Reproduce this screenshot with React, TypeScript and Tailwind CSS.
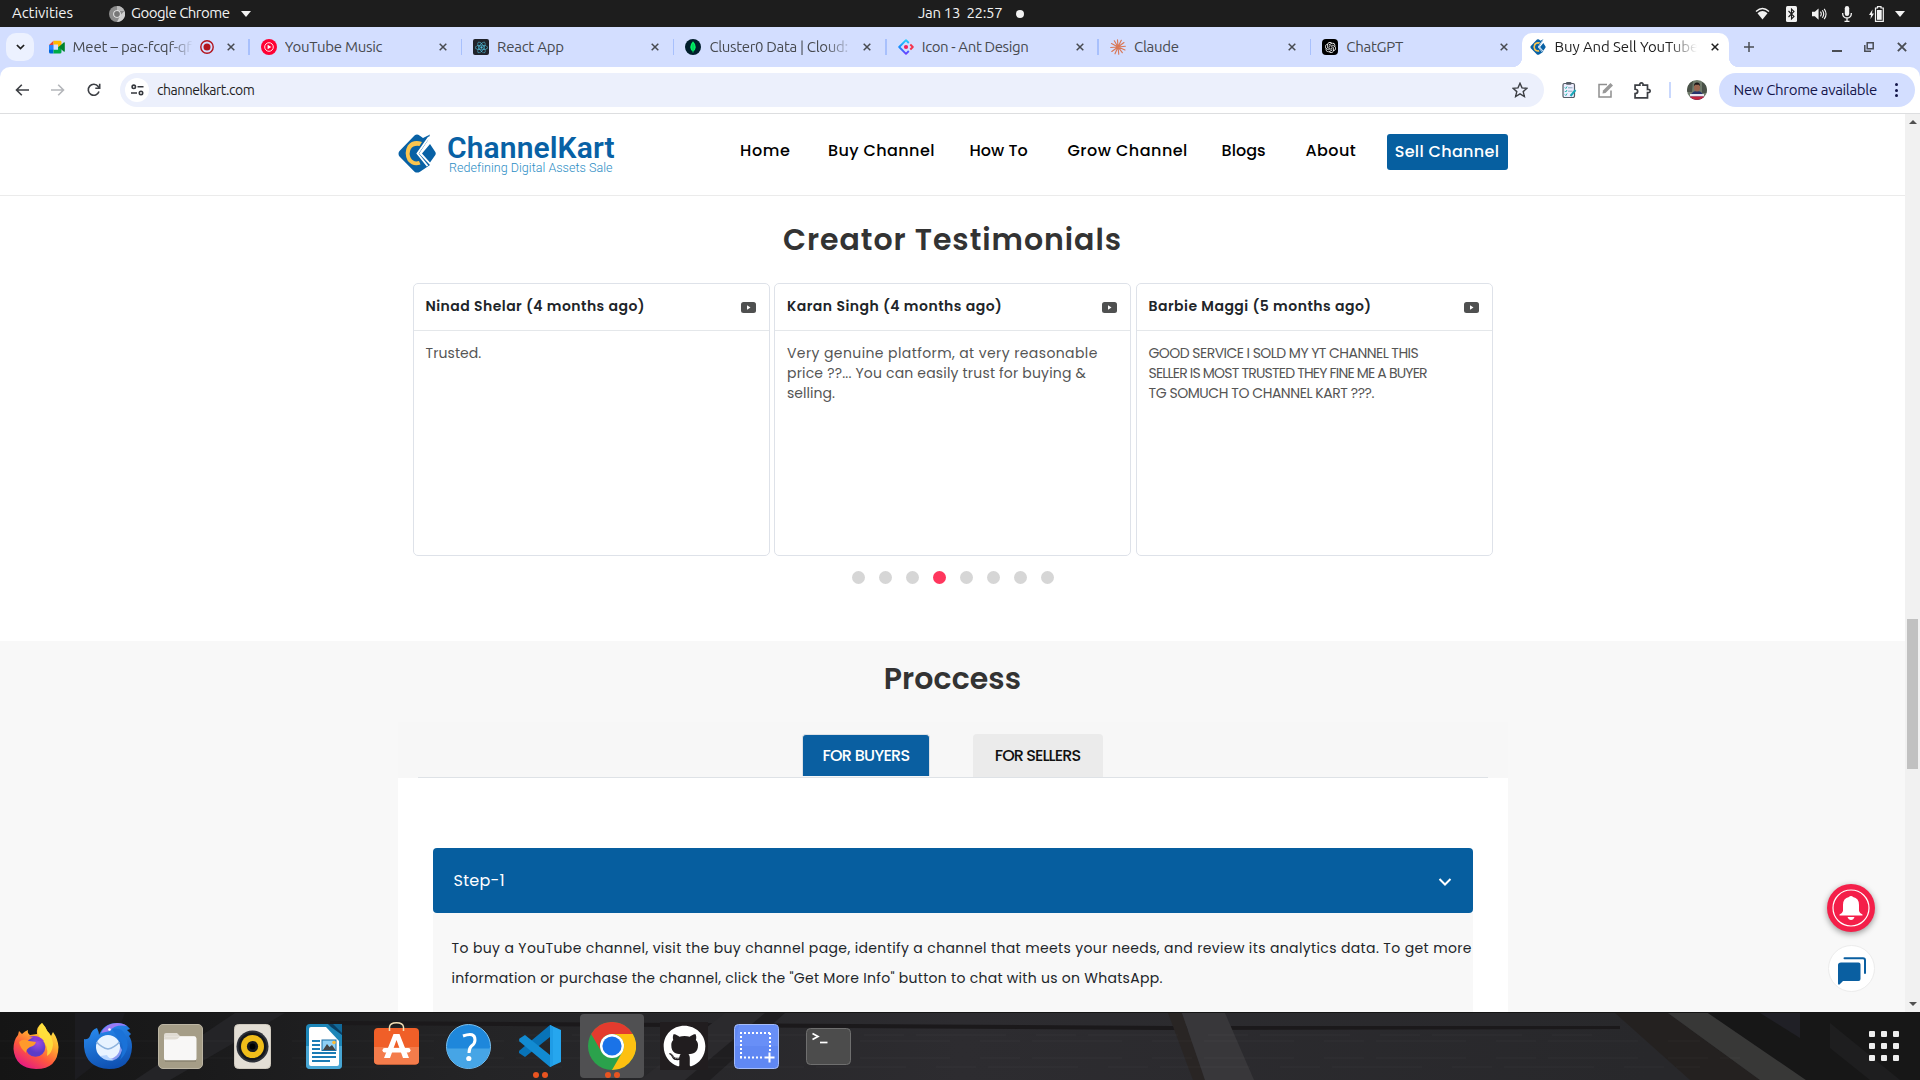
import React from "react";
import { FaReact, FaGithub } from "react-icons/fa";
import { SiOpenai } from "react-icons/si";

const ui = "font-['Ubuntu','Noto_Sans',sans-serif]";
const page = "font-['Poppins','Inter',sans-serif] [font-feature-settings:'cv11']";

/* ---------- brand mark ---------- */
function KartMark({ className }: { className: string }) {
  return (
    <svg viewBox="0 0 38 39" className={className}>
      <path d="M16.5 1.5Q19 -.3 21.500 1.500L25 4L32 .5L29.500 7L21 19.500L32 31L22 37.700Q19 39.500 16.500 37.700L1.500 22.500Q-.5 19.500 1.500 17Z" fill="#0861a5" />
      <path d="M24 8Q15 5 9.800 11.500Q5.500 19 9.800 27Q15 33 22.500 30.500L21 27Q15.500 28.500 12.800 24Q10.500 19.500 12.800 15Q15.500 11 21.500 12Z" fill="#fbc54e" />
      <path d="M31 3L19.500 19.500L29.500 32" fill="none" stroke="#fff" strokeWidth="1.900" />
      <path d="M32 10L37 17.500Q38.500 19.500 37 21.500L32 28.500L24 19.500Z" fill="#0861a5" />
    </svg>
  );
}

/* ---------- favicons ---------- */
function MeetIcon() {
  return (
    <svg viewBox="0 0 16 16" className="size-4">
      <path d="M0 6L4.500 1.800V6Z" fill="#ea4335" />
      <rect y="6" width="4.500" height="5" fill="#2684fc" />
      <path d="M0 10.800H4.500V14.500H1.500Q0 14.500 0 13Z" fill="#0066da" />
      <path d="M4.500 1.800H11Q12.500 1.800 12.500 3.200V7L9 8V5.500H4.500Z" fill="#ffba00" />
      <path d="M4.500 10.800H9V8L12.500 7V13Q12.500 14.500 11 14.500H4.500Z" fill="#00ac47" />
      <path d="M9.500 8L15 3.300Q15.800 3 15.800 4V12.300Q15.800 13 15 12.700Z" fill="#00832d" />
    </svg>
  );
}
function MusicIcon() {
  return (
    <svg viewBox="0 0 16 16" className="size-4">
      <circle cx="8" cy="8" r="8" fill="#ff0033" />
      <circle cx="8" cy="8" r="4.300" fill="none" stroke="#fff" strokeWidth=".9" />
      <path d="M6.600 5.800L10.300 8L6.600 10.200Z" fill="#fff" />
    </svg>
  );
}
function ReactFav() {
  return (
    <span className="flex size-4 items-center justify-center rounded-[2px] bg-[#20232a]">
      <FaReact className="size-[13px] text-[#52c1de]" />
    </span>
  );
}
function MongoIcon() {
  return (
    <svg viewBox="0 0 16 16" className="size-4">
      <circle cx="8" cy="8" r="8" fill="#001e2b" />
      <path d="M8 2.300Q10.800 5 10.800 8.300Q10.500 11 8.300 12.400V13.800H7.700V12.400Q5.400 11 5.200 8.300Q5.300 5 8 2.300Z" fill="#00ed64" />
      <path d="M8 5V13" stroke="#00a34a" strokeWidth=".6" />
    </svg>
  );
}
function AntIcon() {
  return (
    <svg viewBox="0 0 16 16" className="size-4" fill="none" strokeWidth="1.900">
      <defs>
        <linearGradient id="ant" x1="0" y1="0" x2="0" y2="1">
          <stop offset="0" stopColor="#29cdff" />
          <stop offset=".5" stopColor="#148eff" />
          <stop offset="1" stopColor="#6a3cff" />
        </linearGradient>
      </defs>
      <path d="M10.800 4L8 1.200L1.200 8L8 14.800L10.800 12" stroke="url(#ant)" strokeLinejoin="round" />
      <path d="M12.300 5.500L14.800 8L12.300 10.500" stroke="#f5334c" strokeLinejoin="round" />
      <circle cx="8" cy="8" r="2.100" fill="#f2225d" />
    </svg>
  );
}
function ClaudeIcon() {
  return (
    <svg viewBox="0 0 16 16" className="size-4" stroke="#d97757" strokeWidth="1.150" strokeLinecap="round">
      <path d="M8 8L7.500 .8M8 8L11.300 1.300M8 8L14 3.500M8 8L15.400 7.300M8 8L15 11M8 8L12.300 13.700M8 8L8.800 15.300M8 8L5 14.800M8 8L1.800 12.500M8 8L.7 8.500M8 8L1.500 4.500M8 8L4.300 1.800" />
    </svg>
  );
}
function GptIcon() {
  return (
    <span className="flex size-4 items-center justify-center rounded-[4px] bg-black">
      <SiOpenai className="size-[11px] text-white" />
    </span>
  );
}

function Cross({ className }: { className: string }) {
  return (
    <svg viewBox="0 0 8 8" className={className} stroke="currentColor" strokeWidth="1.500">
      <path d="M.7 .7L7.300 7.300M7.300 .7L.7 7.300" />
    </svg>
  );
}

type Tab = { title: string; icon: React.ReactNode; spacing: string; fade?: boolean; rec?: boolean };
const tabs: Tab[] = [
  { title: "Meet – pac-fcqf-qfz", icon: <MeetIcon />, spacing: "tracking-[-0.2px]", fade: true, rec: true },
  { title: "YouTube Music", icon: <MusicIcon />, spacing: "tracking-[-0.28px]" },
  { title: "React App", icon: <ReactFav />, spacing: "tracking-[-0.25px]" },
  { title: "Cluster0 Data | Cloud:", icon: <MongoIcon />, spacing: "tracking-[-0.33px]", fade: true },
  { title: "Icon - Ant Design", icon: <AntIcon />, spacing: "tracking-[-0.38px]" },
  { title: "Claude", icon: <ClaudeIcon />, spacing: "tracking-[-0.28px]" },
  { title: "ChatGPT", icon: <GptIcon />, spacing: "tracking-[-0.27px]" },
];

const fadeMask = "[mask-image:linear-gradient(to_right,black_80%,transparent)]";

function SystemBar() {
  return (
    <header className="flex h-[27px] shrink-0 items-center bg-[#1d1d1d] text-[15px] text-[#f2f2f2]">
      <div className="flex w-[918px] items-center pl-3">
        <span className="w-[97px] tracking-[-0.05px]">Activities</span>
        <svg viewBox="0 0 16 16" className="size-4">
          <circle cx="8" cy="8" r="8" fill="#8b8b8b" />
          <path d="M8 0A8 8 0 0 1 15.500 5H8Z" fill="#b9b9b9" />
          <path d="M15.500 5A8 8 0 0 1 8 16L11.500 9Z" fill="#d0d0d0" />
          <circle cx="8" cy="8" r="3.800" fill="#eee" />
          <circle cx="8" cy="8" r="2.900" fill="#777" />
        </svg>
        <span className="ml-1.5 w-[110px] tracking-[-0.52px] whitespace-nowrap">Google Chrome</span>
        <svg viewBox="0 0 10 6" className="h-1.5 w-2.5" fill="#f2f2f2"><path d="M0 0H10L5 6Z" /></svg>
      </div>
      <span className="w-[98px] tracking-[-0.31px] whitespace-pre">Jan 13  22:57</span>
      <span className="size-2 rounded-full bg-[#f2f2f2]" />
      <div className="ml-auto flex items-center pr-[15px] text-[#f2f2f2]">
        <svg viewBox="0 0 16 14" className="mr-4 h-[13px] w-[15px]" fill="none" stroke="currentColor">
          <path d="M1 4.800Q8 -1.500 15 4.800" strokeWidth="1.500" />
          <path d="M2.600 6.600Q8 2 13.400 6.600L8 13.500Z" fill="currentColor" stroke="none" />
        </svg>
        <svg viewBox="0 0 11 16" className="mr-[15px] h-4 w-[11px]">
          <rect width="11" height="16" rx="1.500" fill="#f2f2f2" />
          <path d="M2.500 5L8 10.500L5.500 13V3L8 5.500L2.500 11" fill="none" stroke="#1d1d1d" strokeWidth="1.100" />
        </svg>
        <svg viewBox="0 0 16 14" className="mr-[15px] h-[14px] w-[15px]" fill="none" stroke="currentColor" strokeWidth="1.200">
          <path d="M0 4.500H3L7 1V13L3 9.500H0Z" fill="currentColor" stroke="none" />
          <path d="M9 4.500Q10.800 7 9 9.500M11 3Q14 7 11 11M13 1.500Q17 7 13 12.500" />
        </svg>
        <svg viewBox="0 0 10 16" className="mr-[17px] h-4 w-[10px]" fill="none" stroke="currentColor" strokeWidth="1.300">
          <rect x="2.800" width="4.400" height="10" rx="2.200" fill="currentColor" stroke="none" />
          <path d="M.7 7V8Q1 11.800 5 12Q9 11.800 9.300 8V7M5 12V15.500M2.500 15.300H7.500" />
        </svg>
        <svg viewBox="0 0 15 16" className="mr-[11px] h-4 w-[15px]">
          <path d="M3.500 3.500L0 9H2L1.500 13L5 7.500H3Z" fill="#f2f2f2" />
          <path d="M8.500 2V.7H12V2H14.300V15.300H6.500V2Z" fill="none" stroke="#f2f2f2" strokeWidth="1.200" />
          <rect x="8" y="4" width="4.700" height="9.800" fill="#f2f2f2" />
        </svg>
        <svg viewBox="0 0 10 6" className="h-1.5 w-2.5" fill="currentColor"><path d="M0 0H10L5 6Z" /></svg>
      </div>
    </header>
  );
}

function TabStrip() {
  return (
    <div className="flex h-10 shrink-0 items-end bg-[#d3deff] text-[15px]">
      <div className="flex h-[34px] w-[37.500px] items-center">
        <span className="mb-1.5 ml-1.5 flex size-7 items-center justify-center rounded-[10px] bg-[#ecf1ff]">
          <svg viewBox="0 0 10 6" className="h-1.5 w-[9px]" fill="none" stroke="#1f1f1f" strokeWidth="1.900"><path d="M1 .8L5 4.800L9 .8" /></svg>
        </span>
      </div>
      {tabs.map((t, i) => (
        <div key={t.title} className="flex h-10 w-[212.300px] items-center pb-0 text-[#474a50]">
          <div className="flex w-full items-center pl-[11px]">
            {t.icon}
            <span className={`ml-2 overflow-hidden whitespace-nowrap ${t.spacing} ${t.rec ? "w-[120px]" : "w-[145px]"} ${t.fade ? fadeMask : ""}`}>{t.title}</span>
            {t.rec && (
              <svg viewBox="0 0 14 14" className="ml-[7px] size-[14px]">
                <circle cx="7" cy="7" r="6.200" fill="none" stroke="#b3141d" strokeWidth="1.400" />
                <circle cx="7" cy="7" r="3.500" fill="#b3141d" />
              </svg>
            )}
            <Cross className={t.rec ? "ml-[13px] size-2" : "ml-[9px] size-2"} />
            <span className={i === 6 ? "ml-auto h-4 w-[1.500px]" : "ml-auto h-4 w-[1.500px] bg-[#a8c0fc]"} />
          </div>
        </div>
      ))}
      <div className="-ml-3 flex h-[34px] items-end">
        <span className="h-2.5 w-2.5 bg-[radial-gradient(circle_at_0_0,transparent_10px,white_10.500px)]" />
        <div className="flex h-[34px] w-[207px] items-center rounded-t-[10px] bg-white pb-1.5 pl-2 text-[#1f1f1f]">
          <KartMark className="size-4" />
          <span className={`mt-0 ml-[9px] w-[142px] overflow-hidden tracking-[-0.1px] whitespace-nowrap ${fadeMask}`}>Buy And Sell YouTube</span>
          <Cross className="ml-[14px] size-2" />
        </div>
        <span className="h-2.5 w-2.5 bg-[radial-gradient(circle_at_100%_0,transparent_10px,white_10.500px)]" />
      </div>
      <div className="flex h-10 flex-1 items-center text-[#4a4d54]">
        <svg viewBox="0 0 10 10" className="ml-[5px] size-2.5" stroke="currentColor" strokeWidth="1.500"><path d="M5 0V10M0 5H10" /></svg>
        <div className="ml-auto flex items-center">
          <span className="mt-2 h-[1.500px] w-2.5 bg-[#4a4d54]" />
          <svg viewBox="0 0 10 10" className="ml-[22px] size-2.5" fill="none" stroke="currentColor" strokeWidth="1.500"><path d="M3.200 .8H9.200V6.800H3.200Z" /><path d="M.8 3V9.200H7" /></svg>
          <Cross className="mr-[13px] ml-[23px] size-2.5" />
        </div>
      </div>
    </div>
  );
}

function Toolbar() {
  return (
    <div className="flex h-[46px] shrink-0 items-center bg-[#d3deff]">
      <div className="flex h-[46px] w-full items-center rounded-t-[10px] bg-white text-[#474a50]">
        <svg viewBox="0 0 14 12" className="ml-[15px] h-3 w-[14px]" fill="none" stroke="#3c3f44" strokeWidth="1.600"><path d="M14 6H1.500M6.800 .7L1.500 6L6.800 11.300" /></svg>
        <svg viewBox="0 0 14 12" className="ml-[22px] h-3 w-[14px]" fill="none" stroke="#b4b6ba" strokeWidth="1.600"><path d="M0 6H12.500M7.200 .7L12.500 6L7.200 11.300" /></svg>
        <svg viewBox="0 0 14 14" className="ml-[22px] size-[14px]" fill="none" stroke="#3c3f44" strokeWidth="1.600"><path d="M12 8.500A5.500 5.500 0 1 1 11.200 3.500L12.500 5M12.700 .8V5.200H8.300" /></svg>
        <div className="ml-[19px] flex h-[34px] w-[1424px] items-center rounded-full bg-[#ecf0fc]">
          <span className="ml-[5px] flex size-6 items-center justify-center rounded-full bg-white">
            <svg viewBox="0 0 13 12" className="h-3 w-[13px]" fill="none" stroke="#34373c" strokeWidth="1.600"><circle cx="2.800" cy="2.800" r="1.700" /><path d="M6.500 2.800H12.500M0 9H6" /><circle cx="10" cy="9" r="1.700" /></svg>
          </span>
          <span className="ml-2 text-[14px] tracking-[-0.48px] text-[#1f1f1f]">channelkart.com</span>
          <svg viewBox="0 0 16 16" className="mr-4 ml-auto size-4" fill="none" stroke="#3c3f44" strokeWidth="1.400"><path d="M8 1.300L10 5.900L15 6.300L11.200 9.600L12.400 14.500L8 11.900L3.600 14.500L4.800 9.600L1 6.300L6 5.900Z" /></svg>
        </div>
        <svg viewBox="0 0 15 16" className="ml-[18px] h-4 w-[15px]">
          <rect x="1" y="1.500" width="11.500" height="14" rx="1.500" fill="#eef" stroke="#555c66" strokeWidth="1.200" />
          <rect x="4" y="0" width="5.500" height="2.800" rx="1" fill="#555c66" />
          <path d="M2.800 5.500L3.800 6.500L5 4.500M2.800 9L3.800 10L5 8M2.800 12.500L3.800 13.500L5 11.500" fill="none" stroke="#1bb5a8" />
          <path d="M6 5.800H10.500M6 9.200H10.500" stroke="#8ab" />
          <path d="M8.500 14L13.500 8" stroke="#19a8b8" strokeWidth="2" />
        </svg>
        <svg viewBox="0 0 16 16" className="ml-[21px] size-4" fill="none">
          <path d="M9 2.500H1V15H13V8.500" stroke="#8f8f8f" strokeWidth="1.500" />
          <path d="M4.500 11.500L5 8.500L12.500 1L15 3.500L7.500 11Z" fill="#999" />
        </svg>
        <svg viewBox="0 0 16 16" className="ml-5 size-[17px]" fill="none" stroke="#3c3f44" strokeWidth="1.600">
          <path d="M1 3H5.500Q5.200 .8 7 .8Q8.800 .8 8.500 3H12.700V7Q15.200 6.700 15.200 8.500Q15.200 10.300 12.700 10V15H1V11Q3.500 11 3.500 8.800Q3.500 6.800 1 6.800Z" />
        </svg>
        <span className="ml-[18px] h-4 w-[1.500px] bg-[#c9d8fd]" />
        <svg viewBox="0 0 20 20" className="ml-[16px] size-5">
          <defs><clipPath id="av"><circle cx="10" cy="10" r="10" /></clipPath></defs>
          <g clipPath="url(#av)">
            <rect width="20" height="20" fill="#6f7b6b" />
            <path d="M0 4L6 0L5 12H0ZM15 2L20 5V13H15Z" fill="#4a5249" />
            <path d="M3 20Q3 11 10 11Q17 11 17 20Z" fill="#27346d" />
            <rect x="3" y="14" width="14" height="2.500" fill="#e8e8f0" />
            <rect x="3" y="16.500" width="14" height="4" fill="#c22540" />
            <ellipse cx="10" cy="7.500" rx="3" ry="4" fill="#9a654e" />
            <path d="M6.800 6.500Q7 2.500 10 2.500Q13 2.500 13.200 6.500L12 4.800H8Z" fill="#1c1517" />
          </g>
        </svg>
        <div className="ml-3 flex h-[34px] w-[196px] items-center rounded-full bg-[#d3deff] pl-[15px] text-[#13154a]">
          <span className="w-[161px] text-[15px] tracking-[-0.33px] whitespace-nowrap">New Chrome available</span>
          <span className="flex flex-col gap-[2.500px]">
            <i className="size-[3px] rounded-full bg-[#13154a]" />
            <i className="size-[3px] rounded-full bg-[#13154a]" />
            <i className="size-[3px] rounded-full bg-[#13154a]" />
          </span>
        </div>
      </div>
    </div>
  );
}

/* ---------- site ---------- */
function SiteHeader() {
  return (
    <div className="flex h-[82px] items-start border-b border-[#ebebeb] pl-[398px]">
      <a className="flex w-[342px] pt-5">
        <KartMark className="h-[39px] w-[38px]" />
        <span className="ml-[11px] flex flex-col font-['Roboto']">
          <b className="mt-0 h-[28px] text-[30px] leading-[28px] font-semibold tracking-[0.1px] text-[#0861a5]">ChannelKart</b>
          <span className="ml-[2px] text-[12.500px] leading-[12px] font-light tracking-[0.04px] whitespace-nowrap text-[#2b8cc4]">Redefining Digital Assets Sale</span>
        </span>
      </a>
      <nav className="flex gap-10 pt-[25px] text-[16px] leading-6 font-medium whitespace-nowrap text-black">
        <a className="w-[48px] tracking-[0.6px]">Home</a>
        <a className="w-[101.500px] tracking-[0.4px]">Buy Channel</a>
        <a className="w-[58px] tracking-[0.05px]">How To</a>
        <a className="w-[114px] tracking-[0.48px]">Grow Channel</a>
        <a className="w-[44px] tracking-[0.05px]">Blogs</a>
        <a className="w-[48px] tracking-[0.4px]">About</a>
      </nav>
      <a className="mt-5 ml-[33px] flex h-9 w-[121px] items-center justify-center rounded-[3px] bg-[#065fa0] text-[16px] font-medium tracking-[0.34px] text-white">Sell Channel</a>
    </div>
  );
}

const reviews = [
  { name: "Ninad Shelar (4 months ago)", spacing: "tracking-[0.46px]", lines: [{ t: "Trusted.", s: "tracking-[0.08px]" }] },
  {
    name: "Karan Singh (4 months ago)",
    spacing: "tracking-[0.48px]",
    lines: [
      { t: "Very genuine platform, at very reasonable", s: "tracking-[0.4px]" },
      { t: "price ??... You can easily trust for buying &", s: "tracking-[0.18px]" },
      { t: "selling.", s: "tracking-[0.05px]" },
    ],
  },
  {
    name: "Barbie Maggi (5 months ago)",
    spacing: "tracking-[0.48px]",
    lines: [
      { t: "GOOD SERVICE I SOLD MY YT CHANNEL THIS", s: "tracking-[-0.54px]" },
      { t: "SELLER IS MOST TRUSTED THEY FINE ME A BUYER", s: "tracking-[-0.8px]" },
      { t: "TG SOMUCH TO CHANNEL KART ???.", s: "tracking-[-0.44px]" },
    ],
  },
];

function Testimonials() {
  return (
    <section className="flex h-[445px] flex-col items-center">
      <h2 className="mt-6 text-[30px] leading-10 font-semibold tracking-[0.95px] text-[#333]">Creator Testimonials</h2>
      <div className="mt-[23px] flex w-[1080px] justify-end gap-[4.500px] overflow-hidden">
        {reviews.map((r) => (
          <article key={r.name} className="h-[273px] w-[357px] shrink-0 rounded-[5px] border border-[#dee2e9]">
            <div className="flex h-[47px] items-center justify-between border-b border-[#e4e7ea] pr-[13px] pb-px pl-3">
              <h3 className={`text-[14px] font-semibold text-[#212529] ${r.spacing}`}>{r.name}</h3>
              <svg viewBox="0 0 15 11" className="mt-px h-[11px] w-[15px]"><rect width="15" height="11" rx="2.500" fill="#4f5050" /><path d="M6 3.300L9.500 5.500L6 7.700Z" fill="#fff" /></svg>
            </div>
            <div className="pt-3 pl-3 text-[14px] leading-5 whitespace-nowrap text-[#555]">
              {r.lines.map((l) => <p key={l.t} className={l.s}>{l.t}</p>)}
            </div>
          </article>
        ))}
      </div>
      <div className="mt-[15px] flex gap-[14px]">
        {[0, 1, 2, 3, 4, 5, 6, 7].map((d) => <i key={d} className={d === 3 ? "size-[13px] rounded-full bg-[#ff365d]" : "size-[13px] rounded-full bg-[#d6d6d6]"} />)}
      </div>
    </section>
  );
}

function Process() {
  return (
    <section className="flex flex-1 flex-col items-center overflow-hidden bg-[#f8f8f8]">
      <h2 className="mt-[18px] text-[30px] leading-10 font-semibold tracking-[0.08px] text-[#333]">Proccess</h2>
      <div className="mt-[23px] w-[1110px] bg-[#f7f7f7]">
        <div className="mx-5 flex h-[56px] items-end justify-center gap-[43px] border-b border-[#dee2e6] pt-3 text-[16px] font-medium">
          <div className="mb-px flex h-[42px] w-[128px] items-center justify-center rounded-t-[4px] border border-b-0 border-[#dee2e6] bg-[#0a5fa1] tracking-[-0.7px] text-white">FOR BUYERS</div>
          <div className="flex h-[43px] w-[130px] items-center justify-center rounded-t-[4px] bg-[#ebebeb] pr-px tracking-[-0.92px] text-[#111]">FOR SELLERS</div>
        </div>
      </div>
      <div className="flex w-[1110px] flex-1 flex-col bg-white px-[35px] pt-[70px]">
        <div className="flex h-[65px] shrink-0 items-center justify-between rounded-[4px] bg-[#065e9f] px-[21px] text-[16px] tracking-[0.25px] text-white">
          Step-1
          <svg viewBox="0 0 14 8" className="mt-0.5 h-2 w-[14px]" fill="none" stroke="#fff" strokeWidth="2"><path d="M1.500 1L7 6.500L12.500 1" /></svg>
        </div>
        <div className="flex-1 bg-[#f8f8f8] pt-5 pl-[19px] text-[14px] leading-[30px] whitespace-nowrap text-[#212529]">
          <p className="tracking-[0.37px]">To buy a YouTube channel, visit the buy channel page, identify a channel that meets your needs, and review its analytics data. To get more</p>
          <p className="tracking-[0.28px]">information or purchase the channel, click the "Get More Info" button to chat with us on WhatsApp.</p>
        </div>
      </div>
    </section>
  );
}

function ScrollBar() {
  return (
    <div className="flex w-[15px] flex-col items-center bg-[#f1f1f1]">
      <svg viewBox="0 0 8 4" className="mt-[6px] h-1 w-2" fill="#505050"><path d="M0 4L4 0L8 4Z" /></svg>
      <div className="mt-[495px] h-[150px] w-[11px] bg-[#c1c1c1]" />
      <svg viewBox="0 0 8 4" className="mt-auto mb-[6px] h-1 w-2" fill="#505050"><path d="M0 0L4 4L8 0Z" /></svg>
    </div>
  );
}

/* ---------- dock ---------- */
function Firefox() {
  return (
    <svg viewBox="0 0 46 46" className="size-[46px]">
      <defs>
        <linearGradient id="ff" x1=".85" y1="0" x2=".25" y2="1">
          <stop offset="0" stopColor="#fff44f" /><stop offset=".35" stopColor="#ffb02e" /><stop offset=".65" stopColor="#ff5a3c" /><stop offset="1" stopColor="#e31587" />
        </linearGradient>
        <radialGradient id="fp" cx=".6" cy=".3"><stop offset="0" stopColor="#a04be0" /><stop offset="1" stopColor="#5b3cc8" /></radialGradient>
      </defs>
      <path d="M29 0Q33 4 34 8Q37 10 38 13L40 9Q45 16 45.500 24Q45 46 23 46Q2 45 .5 26Q.5 17 5 12L6 8L9 11Q12 8 15 7Q14 10 17 12L24 11Q23 4 29 0Z" fill="url(#ff)" />
      <path d="M29 0Q33 5 35 9Q40 15 40 22Q39 30 34 33Q36 22 27 15Q22 8 29 0Z" fill="#ffe23c" opacity=".85" />
      <circle cx="22.500" cy="24" r="9.800" fill="url(#fp)" />
      <path d="M6 19Q10 15 16 18L23 19Q22 23 17 24Q13 26 13 30Q7 25 6 19Z" fill="#ff9a2b" />
      <path d="M16 14Q25 11 31 18Q27 17 25 18Q20 14 16 14Z" fill="#8a3ad8" />
    </svg>
  );
}
function Thunderbird() {
  return (
    <svg viewBox="0 0 48 48" className="size-[48px]">
      <defs><linearGradient id="tb" x1=".3" y1="0" x2=".6" y2="1"><stop offset="0" stopColor="#2a8df0" /><stop offset="1" stopColor="#0e4fb0" /></linearGradient></defs>
      <path d="M0 17Q4 18 6 14Q8 7 13 6Q15 10 15 13Q20 1 33 1Q42 1 46 7L43 8L47 12L45 14Q48 18 48 25Q47 47 25 47Q2 46 0 25Z" fill="url(#tb)" />
      <path d="M17 11Q22 1 33 1Q39 1 43 4Q31 2 26 9Z" fill="#9a7bf5" />
      <path d="M28 7Q38 5 41 13Q48 26 36 38Q42 22 34 16Z" fill="#1a72d8" />
      <path d="M28 32L36 24L38 28Q36 36 30 38Q24 39 20 33Z" fill="#8c9cf2" />
      <circle cx="24" cy="25" r="12" fill="#e8f3ff" />
      <path d="M12.500 20Q18 26 24 27Q30 26 35.500 20" fill="none" stroke="#8fb4de" strokeWidth="1.500" />
      <path d="M16 34Q22 40 30 38Q24 36 23 33Z" fill="#b6d5ff" />
      <circle cx="25.500" cy="7.500" r="1.300" fill="#fff" />
    </svg>
  );
}
function Files() {
  return (
    <svg viewBox="0 0 45 45" className="size-[45px]">
      <rect x=".5" y=".5" width="44" height="44" rx="4.500" fill="#a59d87" stroke="#bcb5a3" />
      <path d="M6 11Q6 9 8 9H19L22 12H36Q38 12 38 14V17H6Z" fill="#e0dbd2" />
      <rect x="6" y="12.500" width="32.500" height="24" rx="2.500" fill="#f8f7f6" />
      <path d="M6 15.500H17Q20 15.500 22 12.500H8Q6 12.500 6 15.500Z" fill="#e0dbd2" />
      <path d="M7 37H38" stroke="#7d7665" />
    </svg>
  );
}
function Player() {
  return (
    <svg viewBox="0 0 37 45" className="h-[45px] w-[37px]">
      <rect x=".5" y=".5" width="36" height="44" rx="4" fill="#e3ded5" stroke="#cfc9be" />
      <circle cx="18.500" cy="22.500" r="16" fill="#2c3038" />
      <circle cx="18.500" cy="22.500" r="14" fill="#15171c" />
      <circle cx="18.500" cy="22.500" r="11.500" fill="#f0bd1a" />
      <circle cx="18.500" cy="22.500" r="5.600" fill="#16181d" />
      <circle cx="18.500" cy="22.500" r="3" fill="#000" />
    </svg>
  );
}
function Writer() {
  return (
    <svg viewBox="0 0 36 45" className="h-[45px] w-9">
      <rect width="36" height="45" rx="4" fill="#1d86b8" />
      <path d="M0 22H36V41Q36 45 32 45H4Q0 45 0 41Z" fill="#48a6d4" />
      <path d="M22 0H36V11L34 9Z" fill="#11699a" />
      <path d="M25 3L22 0H27L36 9V11Z" fill="#0a3f63" />
      <path d="M3 5Q3 3 5 3H20L33 17V40Q33 42 31 42H5Q3 42 3 40Z" fill="#fff" />
      <path d="M6 17H14M6 21H14M6 25H14M6 29H30M6 33H30M6 37H24" stroke="#1b7cb5" strokeWidth="1.900" />
      <rect x="16" y="16" width="14" height="10.500" fill="#8fd0f5" stroke="#1b6fa5" />
      <path d="M17 26L21 20L23.500 23L26 21L29.500 26Z" fill="#444" /><circle cx="28" cy="18.500" r="1.800" fill="#fb3" />
    </svg>
  );
}
function Software() {
  return (
    <svg viewBox="0 0 45 43" className="h-[43px] w-[45px]">
      <rect y="6" width="45" height="36.500" rx="4" fill="#f05f28" />
      <path d="M0 25H45V38.500Q45 42.500 41 42.500H4Q0 42.500 0 38.500Z" fill="#f47c4b" />
      <path d="M15.500 9V5Q16 .8 22.500 .8Q29 .8 29.500 5V9" fill="none" stroke="#f3dfb5" strokeWidth="1.500" />
      <path d="M19.500 12H25.500L35 36H29L22.500 18L16 36H10Z" fill="#fff" />
      <rect x="8.500" y="26" width="28" height="4.500" rx="2.200" fill="#fff" />
    </svg>
  );
}
function Help() {
  return (
    <svg viewBox="0 0 45 45" className="size-[45px]">
      <circle cx="22.500" cy="22.500" r="22" fill="#1e87db" stroke="#7cc0ee" />
      <path d="M.8 24.500H44.200A21.800 21.800 0 0 1 .8 24.500Z" fill="#46a5e6" />
      <path d="M17 12Q29 7.500 29 16Q29 19.500 25.500 22Q23 24 23 29" fill="none" stroke="#fff" strokeWidth="3" />
      <circle cx="22.800" cy="34.500" r="2.600" fill="#fff" />
    </svg>
  );
}
function Code() {
  return (
    <svg viewBox="0 0 42 42" className="size-[42px]">
      <path d="M31 0L42 5V37L31 42Z" fill="#26a6ee" />
      <path d="M31 0V12L6 32L0 28Q-.5 26.500 .5 25.500Z" fill="#0873b8" />
      <path d="M31 42V30L6 10L.5 13.500Q-.3 15 .5 16.500Z" fill="#128bd2" />
      <path d="M31 0L34 1.500V40.500L31 42Z" fill="#1f9ce6" />
    </svg>
  );
}
function Chrome() {
  return (
    <svg viewBox="0 0 48 48" className="size-[48px]">
      <circle cx="24" cy="24" r="24" fill="#2ba24c" />
      <path d="M3.200 12A24 24 0 0 1 44.800 12H24A12 12 0 0 0 13.600 30Z" fill="#e33b2e" />
      <path d="M44.800 12A24 24 0 0 1 24 48L34.400 30A12 12 0 0 0 24 12Z" fill="#fdc011" />
      <circle cx="24" cy="24" r="12" fill="#fff" />
      <circle cx="24" cy="24" r="9.600" fill="#1a73e8" />
    </svg>
  );
}
function Capture() {
  return (
    <svg viewBox="0 0 45 45" className="size-[45px]">
      <rect x=".5" y=".5" width="44" height="44" rx="4" fill="#6088f3" stroke="#a5bcf9" />
      <path d="M1 22H44V1H5Z" fill="#7096fb" opacity=".5" />
      <path d="M6 9H36M6 33.500H30M7 12V34M36 9V28" fill="none" stroke="#fff" strokeWidth="2" strokeDasharray="2 2" />
      <path d="M35.500 28.500V38.500M30.500 33.500H40.500" stroke="#fff" strokeWidth="2" />
    </svg>
  );
}
function Terminal() {
  return (
    <svg viewBox="0 0 45 37" className="h-[37px] w-[45px]">
      <rect x=".5" y=".5" width="44" height="36" rx="4" fill="#4c4c4c" stroke="#6f6f6f" />
      <path d="M6.500 5.500L12 8.500L6.500 11.500" fill="none" stroke="#fff" strokeWidth="1.700" />
      <path d="M14 14.500H21.500" stroke="#fff" strokeWidth="1.700" />
    </svg>
  );
}

const dock: { name: string; icon: React.ReactNode; open?: boolean; active?: boolean }[] = [
  { name: "Firefox", icon: <Firefox /> },
  { name: "Thunderbird", icon: <Thunderbird /> },
  { name: "Files", icon: <Files /> },
  { name: "Rhythmbox", icon: <Player /> },
  { name: "Writer", icon: <Writer /> },
  { name: "Software", icon: <div className="pb-[5px]"><Software /></div> },
  { name: "Help", icon: <Help /> },
  { name: "Code", icon: <Code />, open: true },
  { name: "Chrome", icon: <Chrome />, open: true, active: true },
  { name: "GitHub", icon: <div className="flex size-12 items-center justify-center bg-[#211d1f]"><FaGithub className="size-[43px] text-white" /></div> },
  { name: "Screenshot", icon: <Capture /> },
  { name: "Terminal", icon: <Terminal /> },
];

function Dock() {
  return (
    <footer className="relative flex h-[68px] shrink-0 items-start border-t border-[#151515] bg-[#252527]">
      <svg viewBox="0 0 1920 67" preserveAspectRatio="none" className="absolute inset-0 h-full w-full">
        <defs>
          <linearGradient id="wood" x1="0" x2="1"><stop offset="0" stopColor="#151515" /><stop offset=".1" stopColor="#1a1a1b" /><stop offset=".25" stopColor="#242426" /><stop offset=".5" stopColor="#2d2c30" /><stop offset=".86" stopColor="#28282b" /></linearGradient>
        </defs>
        <rect width="1920" height="67" fill="url(#wood)" />
        <path d="M75 0H125L110 40L75 67Z" fill="#1c1c20" />
        <path d="M235 0H285L170 67H135Z" fill="#242427" />
        <path d="M330 8L1170 13L1620 13V16L1170 17L330 12Z" fill="#1b191b" />
        <path d="M725 0H785L700 67H640Z" fill="#2b2a2d" /><path d="M765 0H785L710 67H685Z" fill="#1f1e20" />
        <path d="M1168 0H1182L1205 67H1193Z" fill="#292524" /><path d="M1182 0H1225L1254 67H1205Z" fill="#38373a" />
        <path d="M1615 0H1668L1760 67H1690Z" fill="#242120" /><path d="M1668 0H1708L1806 67H1760Z" fill="#383837" />
        <path d="M1708 0H1920V67H1806Z" fill="#171717" /><path d="M1760 0H1800V25Z" fill="#202026" /><path d="M1830 10L1900 67H1870L1830 35Z" fill="#1e1e1f" />
        <path d="M0 28H1700M0 45H1740M300 54H1700M400 22H1600" stroke="#fff" strokeOpacity=".015" strokeWidth="2" strokeDasharray="90 30 40 12" />
      </svg>
      {dock.map((d) => (
        <div key={d.name} className={`relative mt-px mr-2 h-16 w-16 shrink-0 rounded-[4px] first-of-type:ml-1 ${d.active ? "bg-[#505052]" : ""}`}>
          <div className="flex h-16 items-center justify-center">{d.icon}</div>
          {d.open && (
            <span className="absolute inset-x-0 bottom-0 flex justify-center gap-[3px]">
              <i className="size-[6px] rounded-full bg-[#e95420]" />
              <i className="size-[6px] rounded-full bg-[#e95420]" />
            </span>
          )}
        </div>
      ))}
      <div className="relative mt-[18px] mr-[21px] ml-auto grid grid-cols-3 gap-[6px]">
        {[0, 1, 2, 3, 4, 5, 6, 7, 8].map((n) => <i key={n} className="size-[6px] rounded-[1px] bg-[#eee]" />)}
      </div>
    </footer>
  );
}

export default function App() {
  return (
    <div className={`flex h-[1080px] w-[1920px] flex-col overflow-hidden bg-white ${ui}`}>
      <SystemBar />
      <TabStrip />
      <Toolbar />
      <div className="relative flex min-h-0 flex-1 border-t border-[#dddee0]">
        <main className={`flex w-[1905px] flex-col ${page}`}>
          <SiteHeader />
          <Testimonials />
          <Process />
        </main>
        <ScrollBar />
        <div className="absolute right-[45px] bottom-[20px] flex flex-col items-center gap-[13px]">
          <span className="flex size-12 items-center justify-center rounded-full bg-[#f41f49] shadow-[0_2px_6px_rgba(0,0,0,0.4)]">
            <svg viewBox="0 0 38 38" className="size-[38px]">
              <circle cx="19" cy="19" r="18" fill="none" stroke="#fff" strokeWidth="1.200" />
              <path d="M19 7Q20.500 7 21 8Q27 9 27 16V22Q27.500 24 30.500 25.500V26.500H7.500V25.500Q10.500 24 11 22V16Q11 9 17 8Q17.500 7 19 7Z" fill="#fff" />
              <path d="M15.500 28H22.500Q21.500 31 19 31Q16.500 31 15.500 28Z" fill="#fff" />
            </svg>
          </span>
          <span className="ml-0.5 flex size-[47px] items-center justify-center rounded-full border border-[#ececec] bg-white">
            <svg viewBox="0 0 28 28" className="mt-1 size-7">
              <path d="M3 5.500H20.500Q22.500 5.500 22.500 7.500V22Q22.500 24 20.500 24H5L1.500 27.500Q0 28 0 26.500V8Q0 5.500 3 5.500Z" fill="#0a5fa1" />
              <path d="M6.500 1.200H25Q27 1.200 27 3.200V16" fill="none" stroke="#0a5fa1" strokeWidth="2" strokeLinecap="round" />
            </svg>
          </span>
        </div>
      </div>
      <Dock />
    </div>
  );
}
